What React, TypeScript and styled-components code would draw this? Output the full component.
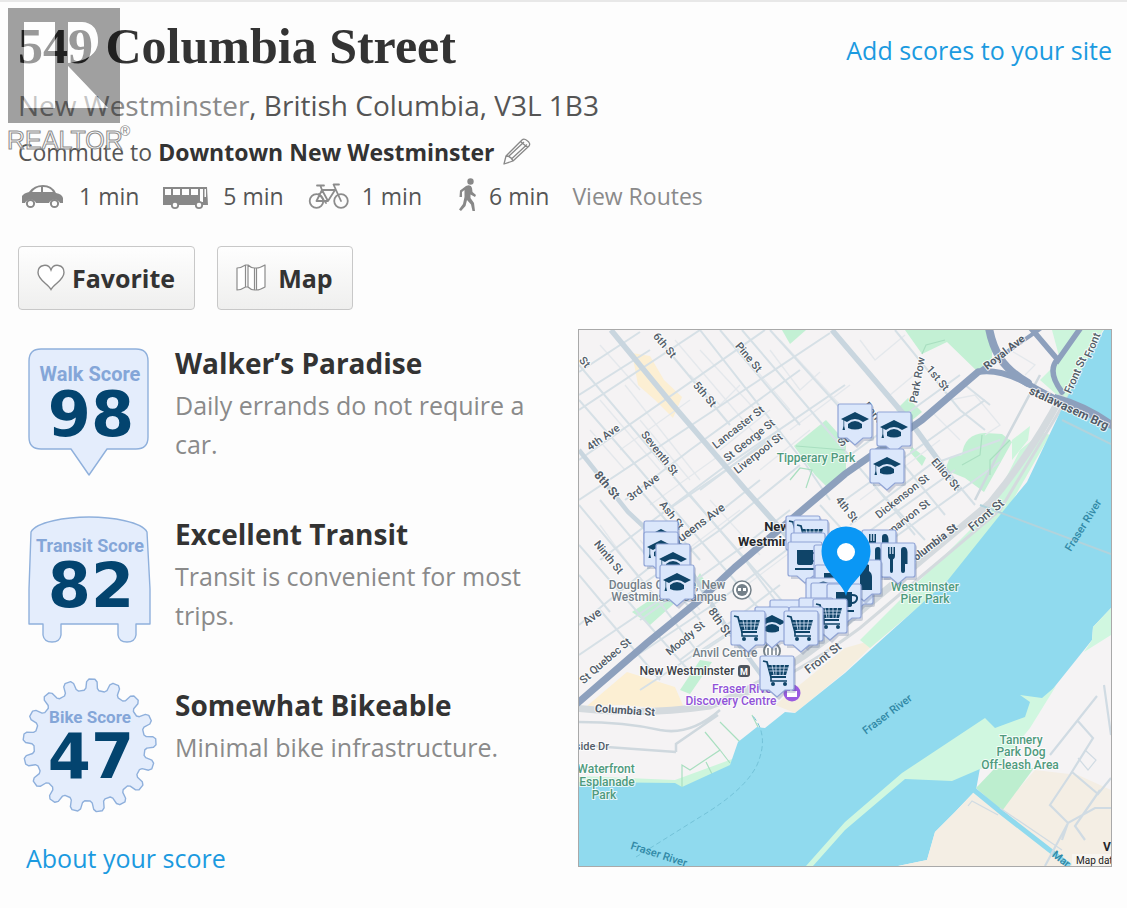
import React from "react";
import styled, { createGlobalStyle, css } from "styled-components";

const GlobalStyle = createGlobalStyle`
  *, *::before, *::after { box-sizing: border-box; }
  body {
    margin: 0;
    background: #fdfdfd;
    color: #444;
    font-family: "Open Sans", "Noto Sans", sans-serif;
  }
`;

/* ---------- layout ---------- */

const Page = styled.main`
  position: relative;
  border-top: 2px solid #e8e8e8;
  padding: 14px 15px 28px 18px;
`;

const Header = styled.header`
  display: flex;
  justify-content: space-between;
  align-items: flex-start;
  gap: 24px;
`;

const Title = styled.h1`
  margin: 0;
  font: bold 50px/60px "Liberation Serif", serif;
  color: #333;
`;

const link = css`
  text-decoration: none;
  &:hover { text-decoration: underline; }
`;

const BlueLink = styled.a`
  ${link}
  color: #1b9ae0;
  font-size: 25px;
  line-height: 36px;
`;

const HeaderLink = styled(BlueLink)`
  padding-top: 16px;
  white-space: nowrap;
`;

const GreyLink = styled.a`
  ${link}
  color: #8a8a8a;
`;

const Address = styled.p`
  margin: 9px 0 0;
  font-size: 28px;
  line-height: 40px;
  color: #555;
`;

const Commute = styled.div`
  display: flex;
  align-items: center;
  gap: 8px;
  margin-top: 9px;
  font-size: 23px;
  line-height: 36px;
  color: #555;
  b { color: #333; }
`;

const IconButton = styled.button`
  display: flex;
  padding: 0;
  border: 0;
  background: none;
  cursor: pointer;
`;

const Modes = styled.ul`
  display: flex;
  flex-wrap: wrap;
  gap: 0 23px;
  margin: 8px 0 0;
  padding: 0;
  list-style: none;
  font-size: 23px;
  line-height: 36px;
  color: #555;
`;

const Mode = styled.li`
  display: flex;
  align-items: center;
  gap: 13px;
`;

const Actions = styled.div`
  display: flex;
  gap: 22px;
  margin-top: 32px;
`;

const ActionButton = styled.button<{ $gap: number }>`
  display: flex;
  align-items: center;
  gap: ${(p) => p.$gap}px;
  height: 64px;
  padding: 0 19px 0 18px;
  border: 1px solid #c8c8c8;
  border-radius: 4px;
  background: linear-gradient(#fefefe, #efefee);
  color: #333;
  font: bold 25px/36px "Open Sans", "Noto Sans", sans-serif;
  cursor: pointer;
`;

const Columns = styled.div`
  display: grid;
  grid-template-columns: 560fr 534fr;
  align-items: start;
  margin-top: 19px;
`;

const Scores = styled.section`
  display: flex;
  flex-direction: column;
  gap: 40px;
  padding: 14px 32px 0 0;
`;

const ScoreItem = styled.article`
  display: grid;
  grid-template-columns: 140px 1fr;
  gap: 17px;
  min-height: 131px;
`;

const BadgeSvg = styled.svg`
  display: block;
  width: 140px;
  height: 131px;
  overflow: visible;
`;

const ScoreTitle = styled.h2`
  margin: 0 0 3px;
  font-size: 28px;
  line-height: 40px;
  color: #333;
`;

const ScoreText = styled.p`
  margin: 0;
  font-size: 25px;
  line-height: 39px;
  color: #8a8a8a;
`;

const AboutLink = styled(BlueLink)`
  align-self: flex-start;
  margin: -16px 0 0 8px;
`;

const MapFrame = styled.div`
  border: 1px solid #a9a9a9;
  aspect-ratio: 534 / 538;
  overflow: hidden;
`;

const MapSvg = styled.svg`
  display: block;
  width: 100%;
  height: 100%;
`;

const Watermark = styled.svg`
  position: absolute;
  left: 0;
  top: -2px;
  width: 140px;
  height: 160px;
  pointer-events: none;
`;

/* ---------- score badges ---------- */

const gearPath = (() => {
  const teeth = 17;
  const pts: string[] = [];
  for (let i = 0; i < teeth; i++) {
    const base = ((i + 0.1) / teeth) * Math.PI * 2 - Math.PI / 2;
    const steps: [number, number][] = [
      [-0.135, 55.5], [-0.1, 57.5], [-0.082, 64], [-0.045, 66.5],
      [0.045, 66.5], [0.082, 64], [0.1, 57.5], [0.135, 55.5],
    ];
    steps.forEach(([a, r]) =>
      pts.push(`${(89.5 + r * Math.cos(base + a)).toFixed(1)},${(745.5 + r * Math.sin(base + a)).toFixed(1)}`)
    );
  }
  return `M${pts.join("L")}Z`;
})();

const badges = {
  walk: {
    top: 343,
    d: "M41 349H136Q148 349 148 361V437Q148 449 136 449H107L89 475L71 449H41Q29 449 29 437V361Q29 349 41 349Z",
  },
  transit: {
    top: 514,
    d: "M31 532C36 522 66 517 89 517S142 522 147 532L150 589V624H136V635Q135 642 127 642T118 635V624H61V635Q60 642 52 642T43 635V624H29V589Z",
  },
  bike: { top: 685, d: gearPath },
};

function Badge({ kind, label, size, value }: { kind: keyof typeof badges; label: string; size: number; value: number }) {
  const { top, d } = badges[kind];
  return (
    <BadgeSvg viewBox={`18 ${top} 140 131`} role="img" aria-label={`${label} ${value}`}>
      <path d={d} fill="#e4edfc" stroke="#8fb0dc" strokeWidth="1.4" strokeLinejoin="round" />
      <text x="90" y={top + 38} textAnchor="middle" fontFamily='Roboto, "Liberation Sans", sans-serif' fontWeight="bold" fontSize={size} fill="#84a6d8">
        {label}
      </text>
      <text x="91" y={top + 93} textAnchor="middle" fontFamily='"DejaVu Sans", sans-serif' fontWeight="bold" fontSize="62" fill="#03446f">
        {value}
      </text>
    </BadgeSvg>
  );
}

/* ---------- small icons ---------- */

const Car = () => (
  <svg width="48" height="36" viewBox="18 178 48 36" aria-hidden="true">
    <path d="M22 203V196Q24 193 29 192Q34 185 43 185Q52 185 56 193Q62 194 63 198V203H60A6 6 0 0 0 49 203H36A6 6 0 0 0 25 203Z" fill="#888" />
    <path d="M32 192Q36 187 41 187V192ZM43 187Q50 187 53 192H43Z" fill="#fdfdfd" />
    <circle cx="30.5" cy="203.5" r="3.6" fill="#fdfdfd" stroke="#888" strokeWidth="2" />
    <circle cx="54.5" cy="203.5" r="3.6" fill="#fdfdfd" stroke="#888" strokeWidth="2" />
  </svg>
);

const Bus = () => (
  <svg width="48" height="36" viewBox="162 178 48 36" aria-hidden="true">
    <path d="M163 187H207L208 205H163Z" fill="#888" />
    <path d="M165 189H171V195H165ZM173 189H180V195H173ZM182 189H189V195H182ZM191 189H198V195H191ZM200 189H203V202H200ZM204.5 189H206V197H204.5Z" fill="#fdfdfd" />
    <circle cx="175" cy="205" r="3.2" fill="#fdfdfd" stroke="#888" strokeWidth="1.8" />
    <circle cx="199" cy="205" r="3.2" fill="#fdfdfd" stroke="#888" strokeWidth="1.8" />
  </svg>
);

const Bike = () => (
  <svg width="42" height="36" viewBox="306 178 42 36" fill="none" stroke="#8c8c8c" strokeWidth="1.8" strokeLinecap="round" strokeLinejoin="round" aria-hidden="true">
    <circle cx="315.5" cy="201" r="6.8" />
    <circle cx="340" cy="201" r="6.8" />
    <path d="M315.5 201L321 190H334L327 201ZM321 190L327 201M340 201L332.5 184.5H338M321 190L319.5 186M316 185.5H323M318 194L325 203" />
  </svg>
);

const Walker = () => (
  <svg width="31" height="36" viewBox="444 178 31 36" aria-hidden="true">
    <circle cx="469.5" cy="181.5" r="3.2" fill="#888" />
    <path d="M465 186Q470 184 471 188L471.5 192L475 195L474 197L469.5 194.5V198L473 203L474 211H471.5L470 204.5L466 200L464.5 206L460 211L458 209.5L462 204L463.5 197V190L461 192V197H458.5L459 190.5Z" fill="#888" />
  </svg>
);

const Pencil = () => (
  <svg width="28" height="28" viewBox="0 0 28 28" fill="none" stroke="#888" strokeWidth="1.3" strokeLinejoin="round" aria-hidden="true">
    <path d="M1 26L3 18L19 2Q21 0 24 2.5Q28 5.5 26 8L10 23ZM3 18Q8 18 10 23M6 18L21 4M9 20.5L24 6.5M17.5 3.5L24.5 9.5" />
  </svg>
);

const Heart = () => (
  <svg width="28" height="28" viewBox="0 0 28 28" fill="#fff" stroke="#888" strokeWidth="1.4" aria-hidden="true">
    <path d="M14 25.5C11 20 1 16 1 8.5C1 0 11.5-1 14 6C16.5-1 27 0 27 8.5C27 16 17 20 14 25.5Z" />
  </svg>
);

const Folded = () => (
  <svg width="30" height="28" viewBox="0 0 30 28" fill="#fff" stroke="#8c8c8c" strokeWidth="1.2" strokeLinejoin="round" aria-hidden="true">
    <path d="M1 4Q5 4 9.500 1L12 1Q15 4 18.500 4H20.500Q24 4 29 1V23Q24 26 20.500 26H18.500Q15 26 12 23H9.500Q5 26 1 26ZM9.500 1V23M12 1V23M18.500 4V26M20.500 4V26" />
  </svg>
);

function RealtorMark() {
  return (
    <Watermark viewBox="0 0 140 160" aria-label="REALTOR">
      <path fillRule="evenodd" fill="#000" fillOpacity="0.37" d="M8 8H120V123H8ZM24 22H55V108H24ZM68 22H82Q98 23 98 42Q97 60 68 63ZM68 66L108 108H68Z" />
      <path fill="#fff" fillOpacity="0.5" d="M24 22H55V108H24ZM68 22H82Q98 23 98 42Q97 60 68 63ZM68 66L108 108H68Z" />
      <text x="7" y="149" fontFamily='"Liberation Sans", sans-serif' fontSize="25" fill="#fff" fillOpacity="0.5" stroke="#8c8c8c" strokeWidth="1">REALTOR</text>
      <text x="120" y="136" fontFamily='"Liberation Sans", sans-serif' fontSize="14" fill="#8c8c8c">®</text>
    </Watermark>
  );
}

/* ---------- map ---------- */

const minorRoads = [
  // streets running towards the river
  "M579 365L690 496L790 610", "M579 400L640 470L730 575L760 610", "M700 330L806 465L830 500", "M720 330L800 425",
  "M655 335L730 425", "M742 330L800 398L880 492L925 540", "M770 330L860 430", "M579 505L650 590L700 655",
  "M579 545L640 615L690 672", "M640 490L700 560", "M690 495L745 560L775 600", "M895 330L960 410L985 430",
  "M820 505L870 560", "M925 445L975 505", "M900 460L945 515", "M870 480L915 535", "M965 385L990 405",
  "M600 500L700 620", "M579 575L610 612", "M600 610L660 680",
  // avenues parallel to the river
  "M579 410L700 330", "M579 372L640 332", "M579 460L765 330", "M579 500L830 333", "M625 500L690 450L800 370",
  "M600 560L720 470L845 385", "M660 515L770 440", "M620 600L720 530L800 465", "M579 625L640 575L760 480",
  "M700 490L780 430", "M640 620L745 545L790 510", "M579 655L660 600", "M600 680L720 600L800 540", "M640 690L740 625",
  "M850 455L960 375", "M845 500L985 400", "M850 525L930 465L1000 440", "M850 545L955 470", "M870 555L1000 462",
  "M705 650L780 600", "M680 660L780 585", "M579 395L650 350",
];

const alleys = [
  "M600 345L640 390", "M675 340L760 440", "M690 375L720 405L740 385", "M600 400L660 470", "M625 385L700 480",
  "M590 430L625 470", "M640 420L690 480", "M700 350L760 415", "M735 345L790 410", "M780 340L840 405", "M600 525L640 580",
  "M710 500L760 555", "M640 540L700 610", "M850 350L890 395L920 370", "M860 340L875 360L905 335", "M760 470L810 430",
  "M720 450L770 410", "M650 505L720 455", "M660 570L740 510", "M740 590L800 545", "M790 430L850 385", "M620 450L690 400",
  "M860 500L940 440", "M930 410L960 440", "M950 400L975 395L1000 425L985 435", "M1010 350L1035 365L1025 375", "M770 350L800 390L820 372",
];

const mapLabels: { t: string; x: number; y: number; r?: number; s?: number; c?: string; b?: boolean }[] = [
  { t: "St", x: 585, y: 362, r: 50 },
  { t: "6th St", x: 665, y: 345, r: 50 },
  { t: "5th St", x: 705, y: 394, r: 50 },
  { t: "Pine St", x: 749, y: 357, r: 50 },
  { t: "4th Ave", x: 603, y: 437, r: -35 },
  { t: "Lancaster St", x: 738, y: 427, r: -38 },
  { t: "St George St", x: 749, y: 440, r: -38 },
  { t: "Liverpool St", x: 758, y: 453, r: -38 },
  { t: "Seventh St", x: 660, y: 453, r: 52 },
  { t: "8th St", x: 607, y: 485, r: 50, s: 12, b: true },
  { t: "3rd Ave", x: 643, y: 487, r: -37 },
  { t: "Tipperary Park", x: 816, y: 458, s: 12, c: "#4f9a7d" },
  { t: "Park Row", x: 917, y: 380, r: -80 },
  { t: "Park", x: 873, y: 412, r: 50 },
  { t: "1st St", x: 938, y: 378, r: 50 },
  { t: "Royal Ave", x: 1004, y: 352, r: -38, b: true },
  { t: "Front St", x: 1075, y: 375, r: -66 },
  { t: "Front", x: 1092, y: 345, r: -68 },
  { t: "stalawasem Brg", x: 1069, y: 408, r: 25, s: 12, b: true },
  { t: "Elliot St", x: 946, y: 474, r: 50 },
  { t: "4th St", x: 847, y: 509, r: 52 },
  { t: "St", x: 843, y: 441, r: -37 },
  { t: "Dickenson St", x: 902, y: 496, r: -38 },
  { t: "Carnarvon St", x: 903, y: 521, r: -38 },
  { t: "Columbia St", x: 932, y: 544, r: -38, b: true },
  { t: "Front St", x: 986, y: 515, r: -40, s: 12 },
  { t: "Ash St", x: 672, y: 515, r: 52 },
  { t: "Queens Ave", x: 698, y: 525, r: -37, s: 12 },
  { t: "Ninth St", x: 609, y: 557, r: 51 },
  { t: "Moody St", x: 685, y: 638, r: -40 },
  { t: "Quebec St", x: 610, y: 656, r: -40 },
  { t: "St", x: 585, y: 678, r: -40 },
  { t: "8th St", x: 720, y: 622, r: 55, s: 12 },
  { t: "Ave", x: 592, y: 617, r: -37, s: 12 },
  { t: "Front St", x: 823, y: 658, r: -38, s: 12 },
  { t: "Columbia St", x: 625, y: 710, r: 4, b: true },
  { t: "side Dr", x: 592, y: 746 },
  { t: "Douglas College, New", x: 667, y: 585, s: 12, c: "#748089" },
  { t: "Westminster Campus", x: 669, y: 597, s: 12, c: "#748089" },
  { t: "Anvil Centre", x: 725, y: 653, s: 12, c: "#748089" },
  { t: "New Westminster", x: 687, y: 671, s: 12, c: "#3c4148" },
  { t: "New", x: 777, y: 527, s: 13, b: true, c: "#25282c" },
  { t: "Westminster", x: 775, y: 542, s: 13, b: true, c: "#25282c" },
  { t: "Fraser River", x: 744, y: 689, s: 12, c: "#9153d8" },
  { t: "Discovery Centre", x: 731, y: 701, s: 12, c: "#9153d8" },
  { t: "Westminster", x: 925, y: 587, s: 12, c: "#4f9a7d" },
  { t: "Pier Park", x: 925, y: 599, s: 12, c: "#4f9a7d" },
  { t: "Waterfront", x: 606, y: 769, s: 12, c: "#4f9a7d" },
  { t: "Esplanade", x: 607, y: 782, s: 12, c: "#4f9a7d" },
  { t: "Park", x: 604, y: 795, s: 12, c: "#4f9a7d" },
  { t: "Tannery", x: 1021, y: 740, s: 12, c: "#4f9a7d" },
  { t: "Park Dog", x: 1021, y: 752, s: 12, c: "#4f9a7d" },
  { t: "Off-leash Area", x: 1020, y: 765, s: 12, c: "#4f9a7d" },
];

const waterLabels = [
  { x: 1083, y: 525, r: -58 },
  { x: 887, y: 714, r: -37 },
  { x: 659, y: 854, r: 18 },
];

type Glyph = "school" | "cart" | "cup" | "food" | "bottle" | "none";

const glyphs: Record<Glyph, React.ReactNode> = {
  none: null,
  school: (
    <>
      <path d="M-14-2L0-9L14-2L8 1Q0-5-8 1Z" />
      <path d="M-7 3Q0-3 7 3V7Q0 10-7 7Z" />
      <path d="M-11.5-1V5L-12.5 9H-10L-10.8 5V-1Z" />
    </>
  ),
  cart: (
    <>
      <path d="M-14-12L-10-11L-6 4H9" fill="none" stroke="#0f4468" strokeWidth="1.8" />
      <path d="M-9.5-8H12L9 2H-6.5Z" />
      <path d="M-8.5-5H11M-7.5-2H10M-5-8L-3 2M-1-8V2M3-8V2M7.5-8L6 2" stroke="#dbe7fb" strokeWidth="0.8" />
      <path d="M-6 4V8H10" fill="none" stroke="#0f4468" strokeWidth="1.6" />
      <circle cx="-4" cy="11" r="2" />
      <circle cx="8" cy="11" r="2" />
    </>
  ),
  cup: (
    <>
      <path d="M-8-9H8V4Q8 6 5 6H-5Q-8 6-8 4ZM-10 9H10V11H-10Z" />
      <path d="M8-6Q14-6 13-2T8 2" fill="none" stroke="#0f4468" strokeWidth="2" />
    </>
  ),
  food: (
    <>
      <path d="M-10-13H-8.5V-6H-7.2V-13H-5.8V-6H-4.5V-13H-3V-4Q-3-1-5-.5V11Q-5 13-6.5 13T-8 11V-.5Q-10-1-10-4Z" />
      <path d="M3 11V-10Q3-13 6-13Q9-13 9.5-8V4H7V11Q7 13 5 13T3 11Z" />
    </>
  ),
  bottle: <path d="M-4-12Q0-15 5-12V-6Q8-4 8 0V13H-4Z" />,
};

const markers: [Glyph, number, number][] = [
  ["school", 855, 421], ["school", 894, 429], ["school", 887, 466],
  ["school", 661, 538], ["school", 661, 549], ["school", 673, 561], ["school", 677, 582],
  ["cart", 803, 533], ["cart", 811, 537], ["none", 808, 550], ["cup", 805, 559],
  ["food", 879, 547], ["food", 872, 560], ["food", 898, 560],
  ["none", 831, 562], ["cup", 832, 582], ["bottle", 856, 587], ["bottle", 864, 577],
  ["bottle", 823, 595], ["none", 828, 600], ["cup", 844, 601],
  ["none", 787, 617], ["school", 772, 624], ["none", 816, 615], ["cart", 830, 616],
  ["none", 806, 624], ["cart", 801, 628], ["cart", 748, 628], ["cart", 777, 673],
];

function NeighbourhoodMap() {
  return (
    <MapSvg viewBox="579 330 532 536" preserveAspectRatio="xMidYMid slice" role="img" aria-label="Map of nearby places">
      <rect x="579" y="330" width="532" height="536" fill="#f5f3f4" />

      {/* commercial blocks, parks and banks */}
      <g fill="#fcefd3">
        <path d="M632 353L650 356L664 380L682 397L673 418L655 400L638 385Z" />
        <path d="M587 706L627 672L675 687L685 710L620 705Z" />
        <path d="M775 705L845 648L880 638L845 672L795 713Z" fill="#f5eede" />
      </g>
      <g fill="#c3f0d4">
        <path d="M782 330H806L790 344Z" />
        <path d="M905 330H992V362L978 372L947 342L922 354Z" />
        <path d="M794 446L826 420L846 442V474L828 488L815 475Z" />
        <path d="M896 410L908 398L922 412L910 422Z" />
        <path d="M962 455Q964 434 985 433L1002 434L1012 442L984 492L965 478L945 470L950 457Z" />
        <path d="M912 447L926 458L922 466L910 452Z" />
        <path d="M700 573L706 583L690 590ZM632 612L662 592L678 600L650 625Z" />
        <path d="M680 690L700 660L712 662L690 694Z" />
      </g>
      <g fill="#cdf5dc">
        <path d="M1052 330H1103L1065 402L1040 380L1060 360Z" />
        <path d="M1042 432L1050 435L1010 505L948 582L870 648L860 640L990 510L1020 450Z" />
        <path d="M1012 440L1030 426L1028 440L1012 460Z" />
        <path d="M579 776L675 780L735 758V766L682 789L579 783Z" />
      </g>

      <g fill="none" stroke="#e4e8ec" strokeWidth="1.3">
        {alleys.map((d) => <path key={d} d={d} />)}
      </g>
      <g fill="none" stroke="#d6e0e6" strokeWidth="2">
        {minorRoads.map((d) => <path key={d} d={d} />)}
      </g>
      <g fill="none" stroke="#c9d6df" strokeWidth="5.5">
        <path d="M611 330L672 404L745 489L795 545" />
        <path d="M832 330L912 424L960 490" />
        <path d="M579 450L628 512L690 570L728 630L765 680" strokeWidth="4.5" />
        <path d="M575 708Q640 716 710 706Q780 680 850 620L990 503Q1030 455 1062 395" stroke="#d4dade" strokeWidth="7" />
        <path d="M700 708Q770 695 860 628L1000 510L1060 410L1111 330" stroke="#d4dade" strokeWidth="3" />
        <path d="M579 722Q625 722 660 730Q690 736 720 710M676 752V744L718 715M579 745L676 752M1040 375L1000 450L975 500" stroke="#cfd8de" strokeWidth="2.5" />
      </g>
      <g fill="none" stroke="#a9dfc0" strokeWidth="1.2">
        <path d="M682 787V765L690 770L720 750L705 732M720 750L730 763M720 722L740 742M752 715L758 727M706 762L712 774" />
        <path d="M796 446L845 450M790 480L800 468L812 470L806 488M922 354L926 345L945 340M990 475V460L1010 440M962 465L980 455L982 435" />
      </g>
      <g fill="none" stroke="#8da0bd" strokeLinecap="round">
        <path d="M572 708L647 643L702 598L735 567L845 474L922 420L978 372" strokeWidth="7" />
        <path d="M978 372Q1000 368 1030 385T1111 425" strokeWidth="6" />
        <path d="M978 372L1050 322" strokeWidth="4" />
        <path d="M989 328Q992 345 1000 358T1028 383" strokeWidth="8" />
        <path d="M1029 326L1058 360L1082 326M1057 360Q1047 372 1062 392" strokeWidth="5.5" />
      </g>

      {/* river */}
      <path fill="#90daee" d="M1111 330H1104L1080 372L1065 402L1027 482L1008 505L948 580L878 643L845 673L795 713L785 712L765 728L757 727L738 742L730 765L682 787L675 783L579 782V866H1111Z" />
      <path d="M1055 394Q1085 402 1111 420V429L1055 400Z" fill="#8da0bd" />
      <path d="M980 505L1111 554M1062 420L1111 444" stroke="#b2d3dc" strokeWidth="2" />
      <path d="M636 857L700 817Q745 790 757 765Q770 735 752 715" fill="none" stroke="#73c2d8" strokeWidth="1" strokeDasharray="5 3" />

      {/* south bank */}
      <path fill="#f5f3f4" d="M1111 608L1093 627L1092 640L1052 690L1030 717L980 768L976 790L955 812L935 832L927 860L898 866H1111Z" />
      <path fill="#f4eee4" d="M1035 770L1078 775L1111 790V866H898L927 860L935 832L955 812L976 790L1000 810Z" />
      <path fill="#d0f7e0" d="M1111 608L1093 627L1092 640L1084 652L1111 635ZM806 866L845 822L902 773L985 718L995 728L1025 717L1030 702L1020 695L1042 698L1056 686L1030 728L1000 765L980 769L952 781L905 779L845 830L813 866Z" />
      <path fill="#bdeecf" d="M976 788L995 768L1034 768L1002 811Z" />
      <path d="M974 790L1002 813L1070 866" stroke="#90daee" strokeWidth="5" fill="none" />
      <g fill="none" stroke="#d0dbe3" strokeWidth="2.2">
        <path d="M1097 696L1050 755M1077 720L1093 738L1070 775L1050 805L1068 823L1095 808H1111M1072 772L1098 794L1111 778M1068 823L1045 866M1068 823L1062 840M1085 840L1075 826L1100 790M1104 685L1111 735" />
        <path d="M968 806L972 801L998 815M1000 808L1062 850M1085 750L1096 760L1088 770L1078 758" strokeWidth="1.2" />
      </g>

      {/* place symbols */}
      <g>
        <circle cx="742" cy="590" r="9" fill="#fff" stroke="#748089" strokeWidth="1.5" />
        <circle cx="742" cy="590" r="6" fill="#748089" />
        <path d="M738 588H741V591H738ZM743 588H746V591H743Z" fill="#fff" />
        <circle cx="772" cy="651" r="8" fill="#fff" stroke="#748089" strokeWidth="2" />
        <path d="M768 648V655M772 648V655M776 648V655" stroke="#748089" strokeWidth="1.5" />
        <rect x="738" y="665" width="12" height="12" rx="3" fill="#4e545c" />
        <text x="744" y="675" textAnchor="middle" fontFamily="Roboto, sans-serif" fontSize="9" fontWeight="bold" fill="#fff">M</text>
        <circle cx="792" cy="693" r="8.5" fill="#9a5be0" />
        <path d="M787 691H790V689L793 691H797V697H787Z" fill="#fff" />
      </g>

      <g fontFamily="Roboto, sans-serif" textAnchor="middle" stroke="#fff" strokeWidth="2" strokeOpacity="0.8" paintOrder="stroke" strokeLinejoin="round">
        {mapLabels.map((l, i) => (
          <text key={i} transform={`translate(${l.x} ${l.y}) rotate(${l.r ?? 0})`} y="4" fontSize={l.s ?? 11} fontWeight={l.b ? 700 : 500} fill={l.c ?? "#525c68"}>
            {l.t}
          </text>
        ))}
      </g>
      <g fontFamily="Roboto, sans-serif" textAnchor="middle" fontSize="11" fontWeight="500" fill="#3189a6">
        {waterLabels.map((l) => (
          <text key={l.x} transform={`translate(${l.x} ${l.y}) rotate(${l.r})`} y="4">Fraser River</text>
        ))}
        <text transform="translate(1059 862) rotate(38)">Mar</text>
      </g>
      <text x="1103" y="851" fontFamily="Roboto, sans-serif" fontSize="12" fontWeight="bold" fill="#25282c">V</text>
      <rect x="1072" y="854" width="39" height="12" fill="#f8f6f2" fillOpacity="0.8" />
      <text x="1076" y="864" fontFamily="Roboto, sans-serif" fontSize="10" fill="#222">Map dat</text>

      {markers.map(([glyph, x, y], i) => (
        <g key={i} transform={`translate(${x} ${y})`}>
          <path d="M-14-15H17Q19-15 19-13V18Q19 20 17 20H9L2 27L-6 20H-14Z" fill="#4f638b" fillOpacity="0.25" />
          <path d="M-15-17H15Q17-17 17-15V15Q17 17 15 17H8L0 24L-8 17H-15Q-17 17-17 15V-15Q-17-17-15-17Z" fill="#dbe7fb" stroke="#90a4d6" strokeWidth="1.2" />
          <g fill="#0f4468">{glyphs[glyph]}</g>
        </g>
      ))}

      <path fill="#0a97f5" d="M846 596C842 581 821.5 572 821.5 551A24.5 24.5 0 0 1 870.5 551C870.5 572 850 581 846 596Z" />
      <circle cx="846" cy="552" r="9" fill="#fff" />
    </MapSvg>
  );
}

/* ---------- page ---------- */

const scores = [
  { kind: "walk", label: "Walk Score", size: 20, value: 98, title: "Walker’s Paradise", text: "Daily errands do not require a car." },
  { kind: "transit", label: "Transit Score", size: 18, value: 82, title: "Excellent Transit", text: "Transit is convenient for most trips." },
  { kind: "bike", label: "Bike Score", size: 17, value: 47, title: "Somewhat Bikeable", text: "Minimal bike infrastructure." },
] as const;

const modes = [
  { name: "Drive", icon: <Car />, time: "1 min" },
  { name: "Bus", icon: <Bus />, time: "5 min" },
  { name: "Cycle", icon: <Bike />, time: "1 min" },
  { name: "Walk", icon: <Walker />, time: "6 min" },
];

export default function App() {
  return (
    <>
      <GlobalStyle />
      <Page>
        <Header>
          <Title>549 Columbia Street</Title>
          <HeaderLink href="#badges">Add scores to your site</HeaderLink>
        </Header>
        <Address>
          <GreyLink href="#city">New Westminster</GreyLink>, British Columbia, V3L 1B3
        </Address>
        <Commute>
          <span>Commute to <b>Downtown New Westminster</b></span>
          <IconButton type="button" aria-label="Edit commute"><Pencil /></IconButton>
        </Commute>
        <Modes>
          {modes.map((m) => (
            <Mode key={m.name} title={m.name}>{m.icon}{m.time}</Mode>
          ))}
          <Mode><GreyLink href="#routes">View Routes</GreyLink></Mode>
        </Modes>
        <Actions>
          <ActionButton type="button" $gap={7}><Heart />Favorite</ActionButton>
          <ActionButton type="button" $gap={12}><Folded />Map</ActionButton>
        </Actions>
        <Columns>
          <Scores>
            {scores.map((s) => (
              <ScoreItem key={s.kind}>
                <Badge kind={s.kind} label={s.label} size={s.size} value={s.value} />
                <div>
                  <ScoreTitle>{s.title}</ScoreTitle>
                  <ScoreText>{s.text}</ScoreText>
                </div>
              </ScoreItem>
            ))}
            <AboutLink href="#about">About your score</AboutLink>
          </Scores>
          <MapFrame><NeighbourhoodMap /></MapFrame>
        </Columns>
        <RealtorMark />
      </Page>
    </>
  );
}
